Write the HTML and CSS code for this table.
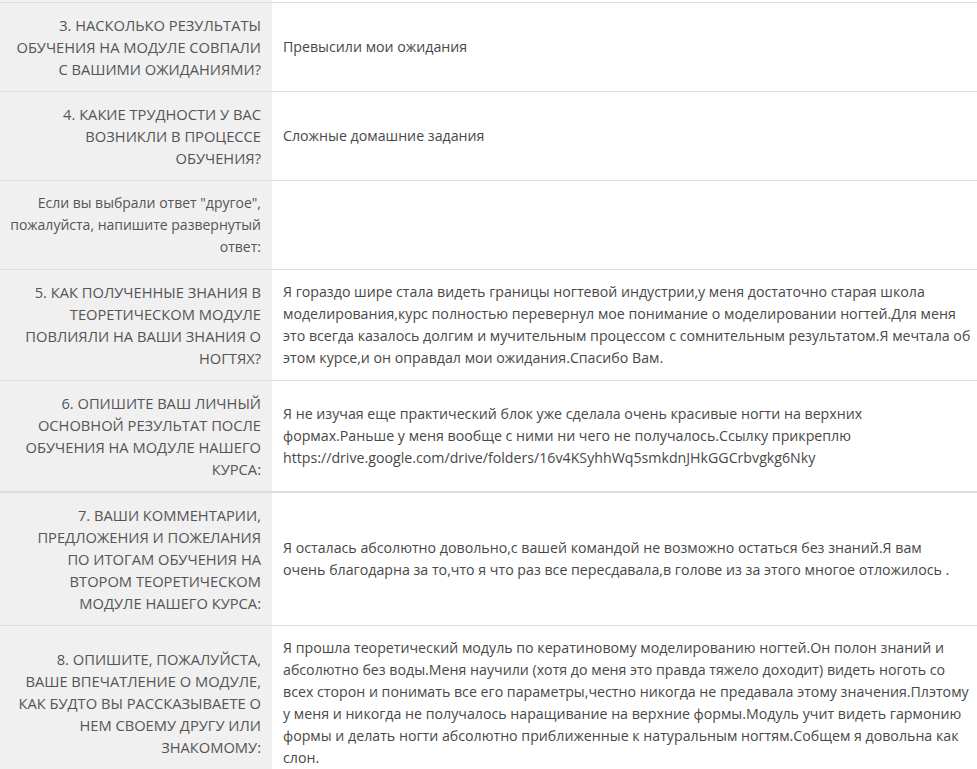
FILE: index.html
```html
<!DOCTYPE html>
<html lang="ru">
<head>
<meta charset="utf-8">
<title>Анкета</title>
<link rel="stylesheet" href="styles.css">
</head>
<body>
<table class="answers">
  <colgroup><col class="col-q"><col class="col-a"></colgroup>
  <tr class="cut"><td class="q"></td><td class="a"></td></tr>
  <tr>
    <td class="q">3. НАСКОЛЬКО РЕЗУЛЬТАТЫ<br>ОБУЧЕНИЯ НА МОДУЛЕ СОВПАЛИ<br>С ВАШИМИ ОЖИДАНИЯМИ?</td>
    <td class="a">Превысили мои ожидания</td>
  </tr>
  <tr>
    <td class="q">4. КАКИЕ ТРУДНОСТИ У ВАС<br>ВОЗНИКЛИ В ПРОЦЕССЕ<br>ОБУЧЕНИЯ?</td>
    <td class="a">Сложные домашние задания</td>
  </tr>
  <tr>
    <td class="q q-plain">Если вы выбрали ответ "другое",<br>пожалуйста, напишите развернутый<br>ответ:</td>
    <td class="a"></td>
  </tr>
  <tr>
    <td class="q">5. КАК ПОЛУЧЕННЫЕ ЗНАНИЯ В<br>ТЕОРЕТИЧЕСКОМ МОДУЛЕ<br>ПОВЛИЯЛИ НА ВАШИ ЗНАНИЯ О<br>НОГТЯХ?</td>
    <td class="a">Я гораздо шире стала видеть границы ногтевой индустрии,у меня достаточно старая школа<br>моделирования,курс полностью перевернул мое понимание о моделировании ногтей.Для меня<br>это всегда казалось долгим и мучительным процессом с сомнительным результатом.Я мечтала об<br>этом курсе,и он оправдал мои ожидания.Спасибо Вам.</td>
  </tr>
  <tr class="thick">
    <td class="q">6. ОПИШИТЕ ВАШ ЛИЧНЫЙ<br>ОСНОВНОЙ РЕЗУЛЬТАТ ПОСЛЕ<br>ОБУЧЕНИЯ НА МОДУЛЕ НАШЕГО<br>КУРСА:</td>
    <td class="a">Я не изучая еще практический блок уже сделала очень красивые ногти на верхних<br>формах.Раньше у меня вообще с ними ни чего не получалось.Ссылку прикреплю<br>https://drive.google.com/drive/folders/16v4KSyhhWq5smkdnJHkGGCrbvgkg6Nky</td>
  </tr>
  <tr>
    <td class="q">7. ВАШИ КОММЕНТАРИИ,<br>ПРЕДЛОЖЕНИЯ И ПОЖЕЛАНИЯ<br>ПО ИТОГАМ ОБУЧЕНИЯ НА<br>ВТОРОМ ТЕОРЕТИЧЕСКОМ<br>МОДУЛЕ НАШЕГО КУРСА:</td>
    <td class="a">Я осталась абсолютно довольно,с вашей командой не возможно остаться без знаний.Я вам<br>очень благодарна за то,что я что раз все пересдавала,в голове из за этого многое отложилось .</td>
  </tr>
  <tr>
    <td class="q">8. ОПИШИТЕ, ПОЖАЛУЙСТА,<br>ВАШЕ ВПЕЧАТЛЕНИЕ О МОДУЛЕ,<br>КАК БУДТО ВЫ РАССКАЗЫВАЕТЕ О<br>НЕМ СВОЕМУ ДРУГУ ИЛИ<br>ЗНАКОМОМУ:</td>
    <td class="a">Я прошла теоретический модуль по кератиновому моделированию ногтей.Он полон знаний и<br>абсолютно без воды.Меня научили (хотя до меня это правда тяжело доходит) видеть ноготь со<br>всех сторон и понимать все его параметры,честно никогда не предавала этому значения.Плэтому<br>у меня и никогда не получалось наращивание на верхние формы.Модуль учит видеть гармонию<br>формы и делать ногти абсолютно приближенные к натуральным ногтям.Собщем я довольна как<br>слон.</td>
  </tr>
</table>
</body>
</html>
```

FILE: styles.css
```css
html, body {
  margin: 0;
  padding: 0;
  background: #ffffff;
}

body {
  font-family: "Open Sans", "Liberation Sans", sans-serif;
  font-size: 14.2px;
  line-height: 22px;
  color: #444444;
}

.answers {
  width: 977px;
  border-collapse: collapse;
  table-layout: fixed;
}

.answers .col-q {
  width: 272px;
}

.answers td {
  border-top: 1px solid #dddddd;
  padding: 11px 10px 11px 11px;
  vertical-align: middle;
  white-space: nowrap;
  overflow: hidden;
}

.answers .q {
  background: #f0f0f0;
  text-align: right;
  color: #555555;
  font-size: 14.7px;
  font-weight: 400;
  padding-right: 11px;
  padding-left: 2px;
}

.answers .q-plain {
  font-size: 14px;
}

.answers .a {
  font-weight: 400;
  color: #484848;
}

.answers .cut td {
  border-top: 0;
  padding: 0;
  height: 2px;
  line-height: 0;
}

.answers .thick + tr td {
  border-top: 2px solid #dddddd;
}
```
